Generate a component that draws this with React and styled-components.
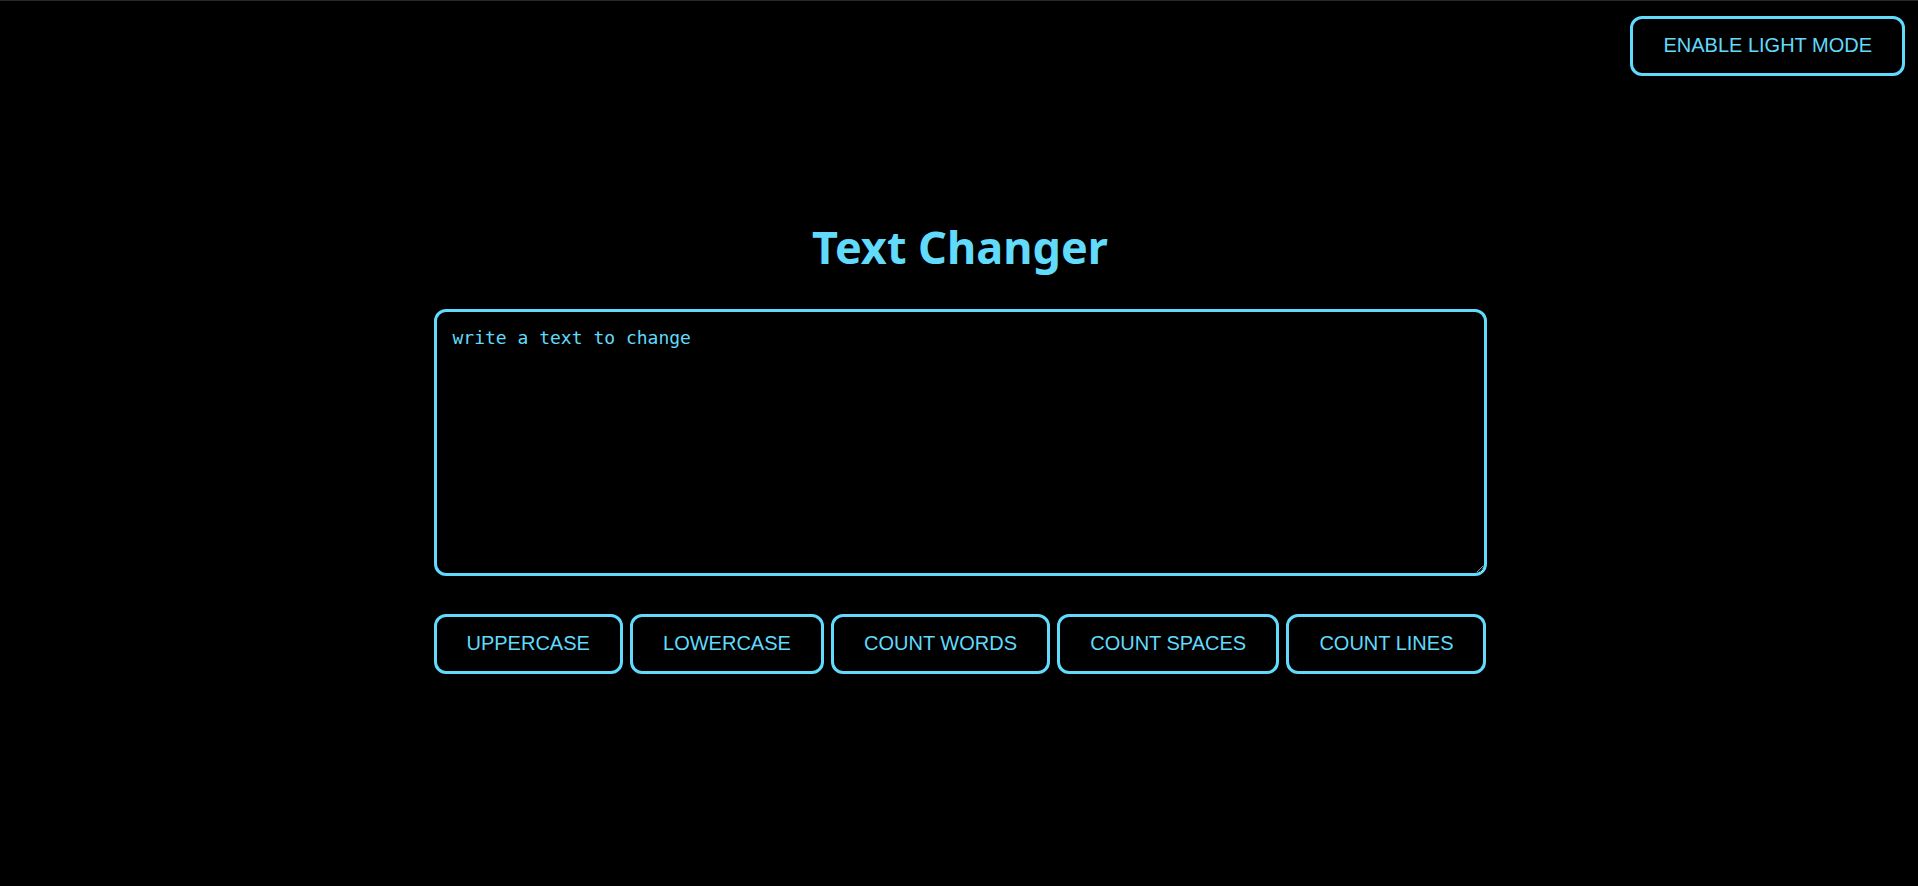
import React, { useState } from "react";
import styled, { createGlobalStyle } from "styled-components";

const CYAN = "#61dafb";

const Global = createGlobalStyle`
  html, body {
    margin: 0;
    padding: 0;
    background: #000;
  }
  body {
    border-top: 1px solid #24282e;
    min-height: 885px;
    font-family: "Liberation Sans", Arial, sans-serif;
    color: ${CYAN};
  }
`;

const TopBar = styled.header`
  display: flex;
  justify-content: flex-end;
  padding: 15px 13px 0 0;
`;

const OutlineButton = styled.button`
  font-family: "Liberation Sans", Arial, sans-serif;
  font-size: 20px;
  line-height: 23px;
  color: ${CYAN};
  background: #000;
  border: 3px solid ${CYAN};
  border-radius: 12px;
  padding: 15px 30px 16px;
  cursor: pointer;
  text-transform: uppercase;
`;

const Main = styled.main`
  display: flex;
  flex-direction: column;
  align-items: center;
  padding-left: 2px;
`;

const Title = styled.h1`
  font-family: "Noto Sans", "Open Sans", sans-serif;
  font-weight: 700;
  font-size: 45px;
  line-height: 56px;
  margin: 143px 0 0;
  color: ${CYAN};
`;

const Editor = styled.textarea`
  box-sizing: border-box;
  width: 1053px;
  height: 267px;
  margin-top: 34px;
  padding: 15px 16px;
  background: #000;
  color: ${CYAN};
  border: 3px solid ${CYAN};
  border-radius: 12px;
  font-family: "DejaVu Sans Mono", "Liberation Mono", monospace;
  font-size: 18px;
  line-height: 22px;
  outline: none;
  &::placeholder {
    color: ${CYAN};
    opacity: 1;
  }
`;

const ButtonRow = styled.div`
  box-sizing: border-box;
  width: 1053px;
  margin-top: 38px;
  display: flex;
  justify-content: space-between;
`;

export default function App() {
  const [text, setText] = useState("");
  const [light, setLight] = useState(false);
  return (
    <>
      <Global />
      <TopBar>
        <OutlineButton onClick={() => setLight(!light)}>
          Enable Light Mode
        </OutlineButton>
      </TopBar>
      <Main>
        <Title>Text Changer</Title>
        <Editor
          placeholder="write a text to change"
          value={text}
          onChange={(e) => setText(e.target.value)}
        />
        <ButtonRow>
          <OutlineButton onClick={() => setText(text.toUpperCase())}>Uppercase</OutlineButton>
          <OutlineButton onClick={() => setText(text.toLowerCase())}>Lowercase</OutlineButton>
          <OutlineButton>Count Words</OutlineButton>
          <OutlineButton>Count Spaces</OutlineButton>
          <OutlineButton>Count Lines</OutlineButton>
        </ButtonRow>
      </Main>
    </>
  );
}
